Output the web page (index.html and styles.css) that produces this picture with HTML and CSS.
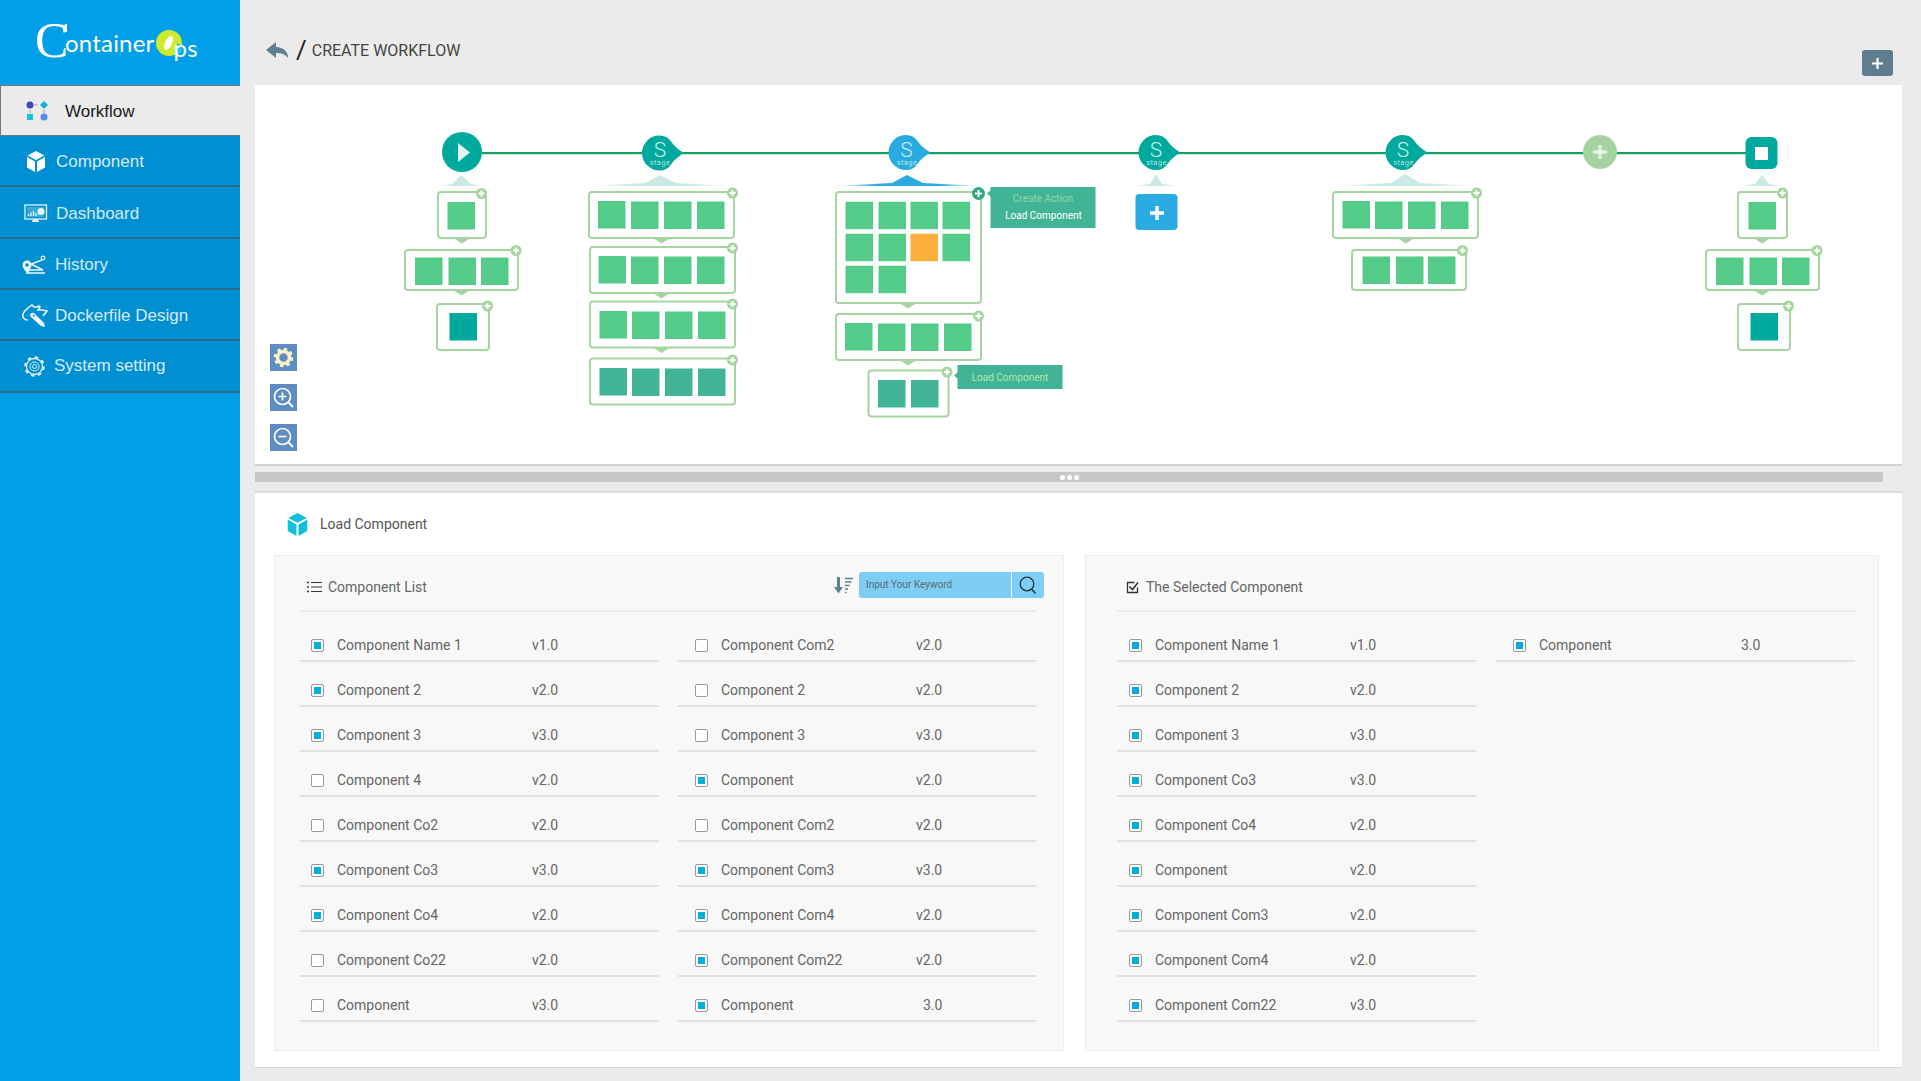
FILE: index.html
```html
<!DOCTYPE html>
<html lang="en">
<head>
<meta charset="utf-8">
<title>Create Workflow</title>
<link rel="stylesheet" href="styles.css">
</head>
<body>
<div class="app">
  <aside class="sidebar">
    <div class="logo">
      <svg width="240" height="85" viewBox="0 0 240 85">
        <text class="logo-c" x="35" y="57">C</text>
        <path d="M66 24v8" stroke="#fff" stroke-width="2"/>
        <text class="logo-t" x="65" y="52">ontainer</text>
        <circle cx="169" cy="43" r="13" fill="#cfea2a"/>
        <ellipse cx="168.500" cy="43" rx="3.500" ry="7.500" transform="rotate(25 168.500 43)" fill="#fff"/>
        <path d="M178 43c3 3 5 6 3 9-1 3-3 3-5 3-1-3-2-8 2-12z" fill="#19c8f0"/>
        <text class="logo-t" x="173.500" y="57">ps</text>
      </svg>
    </div>
    <nav class="nav">
      <a class="nav-item active">
        <svg class="nav-ic wf" width="24" height="22" viewBox="0 0 24 22">
          <circle cx="5" cy="4" r="3.500" fill="#3f48b5"/><path d="M19 0l4 4-4 4-4-4z" fill="#12b5d6"/>
          <rect x="2" y="13" width="6" height="6" fill="#12c0e0"/><circle cx="19" cy="16" r="3.500" fill="#4d8cf5"/>
          <path d="M9 4h4M5 9v3M19 9v3" stroke="#a9a9a9" stroke-width="1.200"/>
        </svg>
        <span>Workflow</span>
      </a>
      <a class="nav-item">
        <svg class="nav-ic cube" width="20" height="23" viewBox="0 0 20 23"><path d="M10 1l8.500 4.500L10 10 1.500 5.500z M1 7l8 4.500V22l-8-4.500z M19 7l-8 4.500V22l8-4.500z" fill="#fff"/></svg>
        <span>Component</span>
      </a>
      <a class="nav-item">
        <svg class="nav-ic dash" width="24" height="20" viewBox="0 0 24 20">
          <rect x="1" y="1" width="21.500" height="14" fill="none" stroke="#e6f2f8" stroke-width="1.300"/>
          <rect x="3" y="3" width="17.500" height="10" fill="#e6f2f8" fill-opacity=".25"/>
          <circle cx="17" cy="7.500" r="3.500" fill="#e6f2f8"/>
          <path d="M4.500 12V10M7 12V8.500M9.500 12V7M12 12V9" stroke="#fff" stroke-width="1.200"/>
          <path d="M8 18h7l-1-3H9z" fill="#e6f2f8"/>
        </svg>
        <span>Dashboard</span>
      </a>
      <a class="nav-item">
        <svg class="nav-ic hist" width="25" height="20" viewBox="0 0 25 20">
          <path d="M6 5.500a4.500 4.500 0 0 1 4.500 4.500c0 3-3 6-4.500 8-1.500-2-4.500-5-4.500-8A4.500 4.500 0 0 1 6 5.500z" fill="#eef6fa"/>
          <circle cx="6" cy="10" r="1.800" fill="#0090d1"/>
          <path d="M21 5L10 9l12 6H8l-2 3h18" fill="none" stroke="#eef6fa" stroke-width="1.500"/>
          <circle cx="22" cy="3" r="1.800" fill="none" stroke="#eef6fa" stroke-width="1.200"/>
        </svg>
        <span>History</span>
      </a>
      <a class="nav-item">
        <svg class="nav-ic dock" width="27" height="23" viewBox="0 0 27 23">
          <path d="M6 16C2 16 0 13 1 10c1-3 3-4 4-5l2-2 3-2 2 2 3 0 2-1 1 1-2 3 4 0 5 1-4 5" fill="none" stroke="#eef6fa" stroke-width="1.500"/>
          <path d="M8 10c2-1.500 3.500-1.500 4.500-.5l9.500 9.500 1 4-4-1-9.500-8.500C8.500 12.500 8 11.500 8 10z" fill="#eef6fa"/>
          <path d="M11 11l1.500 1.500" stroke="#0090d1" stroke-width="1.400"/>
        </svg>
        <span>Dockerfile Design</span>
      </a>
      <a class="nav-item">
        <svg class="nav-ic gear" width="21" height="21" viewBox="0 0 21 21">
          <circle cx="10.500" cy="10.500" r="8" fill="none" stroke="#e6f2f8" stroke-width="1.300"/>
          <circle cx="10.500" cy="10.500" r="9.300" fill="none" stroke="#e6f2f8" stroke-width="2" stroke-dasharray="3.500 3.800"/>
          <circle cx="10.500" cy="10.500" r="4.500" fill="none" stroke="#e6f2f8"/>
          <circle cx="10.500" cy="10.500" r="2" fill="none" stroke="#e6f2f8"/>
        </svg>
        <span>System setting</span>
      </a>
    </nav>
  </aside>

  <main class="main">
    <header class="topbar">
      <svg class="back" width="22" height="16" viewBox="0 0 22 16"><path d="M0 8l10-8v5c8 0 12 5 12 11-3-4-7-5-12-5v5z" fill="#5f7f90"/></svg>
      <span class="slash">/</span>
      <h1 class="title">CREATE WORKFLOW</h1>
      <button class="add-top" type="button"><svg width="13" height="13" viewBox="0 0 13 13"><path d="M6.500 1v11M1 6.500h11" stroke="#fff" stroke-width="2.200"/></svg></button>
    </header>

    <section class="canvas">
      <svg class="diagram" width="1647" height="378" viewBox="255 85 1647 378">
        <defs>
          <linearGradient id="fadeTeal"><stop offset="0" stop-color="#cbeae6" stop-opacity="0"/><stop offset=".3" stop-color="#cbeae6"/><stop offset=".7" stop-color="#cbeae6"/><stop offset="1" stop-color="#cbeae6" stop-opacity="0"/></linearGradient>
          <linearGradient id="fadeBlue"><stop offset="0" stop-color="#29abe2" stop-opacity="0"/><stop offset=".3" stop-color="#29abe2"/><stop offset=".7" stop-color="#29abe2"/><stop offset="1" stop-color="#29abe2" stop-opacity="0"/></linearGradient>
          <g id="pb"><circle r="5.500" fill="#a5d6a0"/><path d="M-3 0h6M0-3v6" stroke="#fff" stroke-width="1.800"/></g>
          <path id="tri" d="M-8 0h16l-8 5z" fill="#a5d6a0"/>
          <path id="stage" d="M0-17.500c5 0 9 2 11.500 6C14.500-7 19-3 24.500 0 19 3 14.500 7 11.500 11.500c-2.500 4-6.500 6-11.500 6a17.500 17.500 0 0 1 0-35z"/>
        </defs>

        <rect class="flow" x="480" y="152" width="1270" height="2.200"/>

        <circle class="teal" cx="462" cy="152" r="20"/>
        <path d="M458 143v19l12-9.500z" fill="#e3f6f3"/>

        <use class="teal" href="#stage" x="659.500" y="153"/>
        <text class="s" x="660" y="157">S</text><text class="st" x="660" y="164.500">stage</text>
        <use class="blue" href="#stage" x="906" y="152.500"/>
        <text class="s" x="906.500" y="157">S</text><text class="st" x="907" y="164.500">stage</text>
        <use class="teal" href="#stage" x="1156" y="152.500"/>
        <text class="s" x="1156" y="157">S</text><text class="st" x="1156.500" y="164.500">stage</text>
        <use class="teal" href="#stage" x="1403" y="152.500"/>
        <text class="s" x="1403" y="157">S</text><text class="st" x="1403.500" y="164.500">stage</text>

        <circle cx="1600" cy="152" r="17" fill="#a5d4a0"/>
        <path d="M1600 145v14M1593 152h14" stroke="#e9f5e8" stroke-width="3"/>

        <rect class="teal" x="1745.500" y="137" width="32" height="32" rx="6"/>
        <rect x="1755" y="147" width="13" height="13" fill="#fff"/>

        <polygon class="f-teal" points="438,186 452,184 461,175 471,184 485,186"/>
        <polygon class="f-teal" points="588,186 645,183 660,175 676,183 735,186"/>
        <polygon class="f-blue" points="834,186 892,183 907,175 923,183 982,186"/>
        <polygon class="f-teal" points="1134,186 1150,184 1156,174 1162,184 1179,186"/>
        <polygon class="f-teal" points="1332,186 1391,183 1405,174 1420,183 1478,186"/>
        <polygon class="f-teal" points="1740,186 1755,184 1762,175 1769,184 1785,186"/>

        <!-- play column -->
        <rect class="box" x="438" y="192" width="48" height="46"/>
        <rect class="sq" x="447.500" y="202"/>
        <use href="#pb" x="481.500" y="193.500"/><use href="#tri" x="462" y="238.500"/>
        <rect class="box" x="405" y="250" width="113" height="40"/>
        <rect class="sq" x="415" y="257.500"/><rect class="sq" x="448.500" y="257.500"/><rect class="sq" x="481" y="257.500"/>
        <use href="#pb" x="516" y="250.500"/><use href="#tri" x="461.500" y="290.500"/>
        <rect class="box" x="437" y="304" width="52" height="46"/>
        <rect class="sq sq-teal" x="449.500" y="313"/>
        <use href="#pb" x="487.500" y="306"/>

        <!-- stage 1 -->
        <rect class="box" x="589" y="192" width="145" height="46"/>
        <rect class="sq" x="598" y="201"/><rect class="sq" x="631" y="201.500"/><rect class="sq" x="664" y="201.500"/><rect class="sq" x="697" y="201.500"/>
        <use href="#pb" x="732.500" y="193"/><use href="#tri" x="661.500" y="238.500"/>
        <rect class="box" x="590" y="247" width="145" height="46"/>
        <rect class="sq" x="598.500" y="256"/><rect class="sq" x="631" y="256.500"/><rect class="sq" x="664" y="256.500"/><rect class="sq" x="697" y="256.500"/>
        <use href="#pb" x="732.500" y="248"/><use href="#tri" x="661.500" y="293.500"/>
        <rect class="box" x="590" y="301.500" width="145" height="46"/>
        <rect class="sq" x="599.500" y="311"/><rect class="sq" x="632" y="311.500"/><rect class="sq" x="665" y="311.500"/><rect class="sq" x="698" y="311.500"/>
        <use href="#pb" x="732.500" y="304"/><use href="#tri" x="661.500" y="348"/>
        <rect class="box" x="590" y="358.500" width="145" height="46"/>
        <rect class="sq sq-dim" x="599.500" y="368"/><rect class="sq sq-dim" x="632" y="368.500"/><rect class="sq sq-dim" x="665" y="368.500"/><rect class="sq sq-dim" x="698" y="368.500"/>
        <use href="#pb" x="732.500" y="360"/>

        <!-- stage 2 -->
        <rect class="box" x="836" y="192" width="145" height="111"/>
        <rect class="sq" x="845.500" y="201.700"/><rect class="sq" x="878.500" y="201.700"/><rect class="sq" x="910.500" y="201.700"/><rect class="sq" x="942.500" y="201.700"/>
        <rect class="sq" x="845.500" y="233.700"/><rect class="sq" x="878.500" y="233.700"/><rect class="sq sq-or" x="910.500" y="233.700"/><rect class="sq" x="942.500" y="233.700"/>
        <rect class="sq" x="845.500" y="265.700"/><rect class="sq" x="878.500" y="265.700"/>
        <use href="#tri" x="908" y="303.500"/>
        <circle cx="978.500" cy="193.500" r="6.500" fill="#2fa884"/><path d="M975 193.500h7M978.500 190v7" stroke="#fff" stroke-width="2"/>
        <path d="M991 190l-4 3.500 4 3.500z" fill="#42b496"/>
        <rect class="tip" x="990.500" y="187" width="105" height="41"/>
        <text class="tip-t tip-dim" x="1043" y="202">Create Action</text>
        <text class="tip-t tip-on" x="1043.500" y="219">Load Component</text>
        <rect class="box" x="836" y="314" width="145" height="46"/>
        <rect class="sq" x="845" y="323"/><rect class="sq" x="878" y="323.500"/><rect class="sq" x="911" y="323.500"/><rect class="sq" x="944" y="323.500"/>
        <use href="#pb" x="978.500" y="316"/><use href="#tri" x="908" y="360.500"/>
        <rect class="box" x="868.500" y="370.500" width="80" height="46"/>
        <rect class="sq sq-dim" x="878" y="380"/><rect class="sq sq-dim" x="911" y="380"/>
        <use href="#pb" x="947" y="372"/>
        <path d="M958 372l-4 3.500 4 3.500z" fill="#42b496"/>
        <rect class="tip" x="957.500" y="365" width="105" height="24"/>
        <text class="tip-t tip-soft" x="1010" y="381">Load Component</text>

        <!-- stage 3 add -->
        <rect x="1135.500" y="194" width="42" height="36" rx="4" fill="#29abe2"/>
        <path d="M1157 206v14M1150 213h14" stroke="#fff" stroke-width="3.500"/>

        <!-- stage 4 -->
        <rect class="box" x="1333" y="192" width="145" height="46"/>
        <rect class="sq" x="1342.500" y="201"/><rect class="sq" x="1375" y="201.500"/><rect class="sq" x="1408" y="201.500"/><rect class="sq" x="1441" y="201.500"/>
        <use href="#pb" x="1476.500" y="193"/><use href="#tri" x="1406" y="238.500"/>
        <rect class="box" x="1352" y="250" width="114" height="40"/>
        <rect class="sq" x="1362.500" y="256.500"/><rect class="sq" x="1396" y="256.500"/><rect class="sq" x="1428" y="256.500"/>
        <use href="#pb" x="1462.500" y="250.500"/>

        <!-- stop column -->
        <rect class="box" x="1738" y="192" width="49" height="46"/>
        <rect class="sq" x="1748.500" y="202"/>
        <use href="#pb" x="1782.500" y="193"/><use href="#tri" x="1762" y="238.500"/>
        <rect class="box" x="1706" y="250" width="113" height="40"/>
        <rect class="sq" x="1716" y="257.500"/><rect class="sq" x="1749.500" y="257.500"/><rect class="sq" x="1782" y="257.500"/>
        <use href="#pb" x="1817" y="250.500"/><use href="#tri" x="1762" y="290.500"/>
        <rect class="box" x="1738" y="304" width="52" height="46"/>
        <rect class="sq sq-teal" x="1750.500" y="313"/>
        <use href="#pb" x="1788.500" y="306"/>
      </svg>
      <div class="tools">
        <button class="tool" type="button">
          <svg width="21" height="21" viewBox="0 0 21 21"><circle cx="10.500" cy="10.500" r="6" fill="none" stroke="#fdf2c4" stroke-width="3.500"/><circle cx="10.500" cy="10.500" r="8.300" fill="none" stroke="#fdf2c4" stroke-width="3" stroke-dasharray="3.300 3.220"/></svg>
        </button>
        <button class="tool" type="button">
          <svg width="21" height="21" viewBox="0 0 21 21"><circle cx="9.500" cy="9.500" r="8" fill="none" stroke="#fff" stroke-width="1.700"/><path d="M15 15l5 5" stroke="#fff" stroke-width="2"/><path d="M9.500 5.500v8M5.500 9.500h8" stroke="#fff" stroke-width="1.700"/></svg>
        </button>
        <button class="tool" type="button">
          <svg width="21" height="21" viewBox="0 0 21 21"><circle cx="9.500" cy="9.500" r="8" fill="none" stroke="#fff" stroke-width="1.700"/><path d="M15 15l5 5" stroke="#fff" stroke-width="2"/><path d="M5.500 9.500h8" stroke="#fff" stroke-width="1.700"/></svg>
        </button>
      </div>
    </section>

    <div class="splitter"><span class="dots"><i></i><i></i><i></i></span></div>

    <section class="lower">
      <div class="lower-head">
        <svg width="23" height="25" viewBox="0 0 20 23"><path d="M10 1l8.500 4.500L10 10 1.500 5.500z M1 7l8 4.500V22l-8-4.500z M19 7l-8 4.500V22l8-4.500z" fill="#10c0dc"/></svg>
        <span>Load Component</span>
      </div>
      <div class="panels">
        <div class="panel panel-left">
          <div class="panel-head">
            <svg class="list-ic" width="15" height="12" viewBox="0 0 15 12"><path d="M4 1.500h11M4 6h11M4 10.500h11" stroke="#333" stroke-width="1.200"/><path d="M0 1.500h2M0 6h2M0 10.500h2" stroke="#333" stroke-width="1.600"/></svg>
            <span>Component List</span>
            <svg class="sort-ic" width="20" height="17" viewBox="0 0 20 17"><path d="M3 0h3v10h3l-4.500 6.500L0 10h3z" fill="#5f7f90"/><path d="M11 1.500h8M11 5h6.500M11 8.500h4.500M11 12h3M11 15.500h1.500" stroke="#5f7f90" stroke-width="1.500"/></svg>
            <div class="search">
              <span class="search-input">Input Your Keyword</span>
              <span class="search-btn"><svg width="18" height="18" viewBox="0 0 18 18"><circle cx="8" cy="8" r="6.800" fill="none" stroke="#24363d" stroke-width="1.300"/><path d="M12.500 13l4 4.500" stroke="#24363d" stroke-width="1.500"/></svg></span>
            </div>
          </div>
          <div class="rows">
            <div class="row"><i class="cb on"></i><span class="name">Component Name 1</span><span>v1.0</span></div>
            <div class="row"><i class="cb"></i><span class="name">Component Com2</span><span>v2.0</span></div>
            <div class="row"><i class="cb on"></i><span class="name">Component 2</span><span>v2.0</span></div>
            <div class="row"><i class="cb"></i><span class="name">Component 2</span><span>v2.0</span></div>
            <div class="row"><i class="cb on"></i><span class="name">Component 3</span><span>v3.0</span></div>
            <div class="row"><i class="cb"></i><span class="name">Component 3</span><span>v3.0</span></div>
            <div class="row"><i class="cb"></i><span class="name">Component 4</span><span>v2.0</span></div>
            <div class="row"><i class="cb on"></i><span class="name">Component</span><span>v2.0</span></div>
            <div class="row"><i class="cb"></i><span class="name">Component Co2</span><span>v2.0</span></div>
            <div class="row"><i class="cb"></i><span class="name">Component Com2</span><span>v2.0</span></div>
            <div class="row"><i class="cb on"></i><span class="name">Component Co3</span><span>v3.0</span></div>
            <div class="row"><i class="cb on"></i><span class="name">Component Com3</span><span>v3.0</span></div>
            <div class="row"><i class="cb on"></i><span class="name">Component Co4</span><span>v2.0</span></div>
            <div class="row"><i class="cb on"></i><span class="name">Component Com4</span><span>v2.0</span></div>
            <div class="row"><i class="cb"></i><span class="name">Component Co22</span><span>v2.0</span></div>
            <div class="row"><i class="cb on"></i><span class="name">Component Com22</span><span>v2.0</span></div>
            <div class="row"><i class="cb"></i><span class="name">Component</span><span>v3.0</span></div>
            <div class="row"><i class="cb on"></i><span class="name">Component</span><span class="bare">3.0</span></div>
          </div>
        </div>
        <div class="panel panel-right">
          <div class="panel-head">
            <svg class="list-ic" width="13" height="13" viewBox="0 0 13 13"><path d="M11.500 6.500v5h-10v-10h7" fill="none" stroke="#333" stroke-width="1.300"/><path d="M3.500 5.500l3 3 5.500-7" fill="none" stroke="#333" stroke-width="1.500"/></svg>
            <span>The Selected Component</span>
          </div>
          <div class="rows rows-sel">
            <div class="column">
              <div class="row"><i class="cb on"></i><span class="name">Component Name 1</span><span>v1.0</span></div>
              <div class="row"><i class="cb on"></i><span class="name">Component 2</span><span>v2.0</span></div>
              <div class="row"><i class="cb on"></i><span class="name">Component 3</span><span>v3.0</span></div>
              <div class="row"><i class="cb on"></i><span class="name">Component Co3</span><span>v3.0</span></div>
              <div class="row"><i class="cb on"></i><span class="name">Component Co4</span><span>v2.0</span></div>
              <div class="row"><i class="cb on"></i><span class="name">Component</span><span>v2.0</span></div>
              <div class="row"><i class="cb on"></i><span class="name">Component Com3</span><span>v2.0</span></div>
              <div class="row"><i class="cb on"></i><span class="name">Component Com4</span><span>v2.0</span></div>
              <div class="row"><i class="cb on"></i><span class="name">Component Com22</span><span>v3.0</span></div>
            </div>
            <div class="column">
              <div class="row"><i class="cb on"></i><span class="name">Component</span><span class="bare">3.0</span></div>
            </div>
          </div>
        </div>
      </div>
    </section>
  </main>
</div>
</body>
</html>
```
FILE: styles.css
```css
* { box-sizing: border-box; }
html, body { margin: 0; height: 100%; overflow: hidden; }
body { font-family: Roboto, "Liberation Sans", sans-serif; background: #ebebeb; color: #666; }

.app { display: flex; height: 1081px; }

/* sidebar */
.sidebar { width: 240px; flex: none; background: #009fe8; }
.logo { height: 85px; }
.logo svg { display: block; }
.logo-c { font-family: "Liberation Serif", serif; font-size: 50px; fill: #fff; }
.logo-t { font-family: Lato, sans-serif; font-size: 24px; fill: #fff; letter-spacing: .2px; }
.nav { display: flex; flex-direction: column; }
.nav-item {
  position: relative; display: flex; align-items: center; height: 51px; padding-top: 2px;
  background: #0090d1; border-bottom: 2px solid #2c6a8c;
  font-family: "Liberation Sans", sans-serif; font-size: 17px; color: #d8e8f2;
}
.nav-item:nth-child(3), .nav-item:nth-child(6) { height: 52px; }
.nav-item:nth-child(3) { padding-top: 4px; }
.nav-item:nth-child(6) { padding-top: 0; }
.nav-item.active {
  height: 51px; padding-top: 3px; background: #ebebeb; color: #1a1a1a;
  border-top: 1px solid #777; border-left: 1px solid #777; border-bottom: 1px solid #777;
}
.nav-ic { flex: none; }
.wf { margin: 0 16px 0 24px; }
.cube { margin: 0 10px 0 26px; }
.dash { margin: 0 8px 0 24px; }
.hist { margin: 0 9px 0 21px; }
.dock { margin: 0 6px 0 22px; }
.gear { margin: 0 9px 0 24px; }

/* main */
.main { flex: 1; min-width: 0; padding: 0 19px 0 15px; display: flex; flex-direction: column; }
.topbar { position: relative; height: 85px; flex: none; display: flex; align-items: center; padding: 15px 0 0 11px; }
.back { flex: none; }
.slash { margin-left: 8px; font-size: 26px; color: #222; font-weight: 400; }
.title { margin: 0 0 0 5px; font-size: 16px; font-weight: 400; color: #444; }
.add-top {
  position: absolute; right: 9px; top: 50px; width: 31px; height: 26px; padding: 0; border: 0;
  border-radius: 3px; background: #607d8f; display: flex; align-items: center; justify-content: center;
}

.canvas { position: relative; height: 381px; flex: none; background: #fff; border-bottom: 2px solid #d2d2d2; }
.diagram { display: block; }
.flow { fill: #159e5f; }
.teal { fill: #00a99d; }
.blue { fill: #29abe2; }
.s { font-size: 21px; font-weight: 300; fill: #c9f0ea; text-anchor: middle; }
.st { font-size: 7.5px; fill: #b5e4de; text-anchor: middle; letter-spacing: .4px; }
.f-teal { fill: url(#fadeTeal); }
.f-blue { fill: url(#fadeBlue); }
.box { fill: #fff; stroke: #a5d6a0; stroke-width: 2; rx: 3px; }
.sq { width: 27.5px; height: 27.5px; fill: #55cb8a; }
.sq-teal { fill: #00a99d; }
.sq-dim { fill: #42b496; }
.sq-or { fill: #fbb03b; }
.tip { fill: #42b496; }
.tip-t { font-size: 10px; text-anchor: middle; }
.tip-dim { fill: #8ed8a0; }
.tip-on { fill: #fff; }
.tip-soft { fill: #b0e6ac; }

.tools { position: absolute; left: 15px; top: 259px; display: flex; flex-direction: column; gap: 13px; }
.tool { width: 27px; height: 27px; padding: 0; border: 0; background: #5d8dc3; display: flex; align-items: center; justify-content: center; }

.splitter { height: 10px; margin: 6px 19px 0 0; flex: none; background: #c8c8c8; display: flex; align-items: center; justify-content: center; }
.dots { display: flex; gap: 2px; }
.dots i { width: 5px; height: 5px; border-radius: 50%; background: #fff; }

.lower { margin-top: 9px; height: 577px; flex: none; background: #fff; border-top: 2px solid #dcdcdc; border-bottom: 1px solid #d4d4d4; padding: 0 23px 0 19px; }
.lower-head { height: 62px; display: flex; align-items: center; padding: 0 0 0 12px; gap: 11px; font-size: 14px; color: #555; }
.panels { display: grid; grid-template-columns: 790px 794px; gap: 21px; }
.panel { height: 496px; background: #f8f8f8; border: 1px solid #ececec; }
.panel-left { padding: 0 26px 0 25px; }
.panel-right { padding: 0 22px 0 31px; }
.panel-head { position: relative; height: 56px; display: flex; align-items: center; padding: 8px 0 0 7px; border-bottom: 2px solid #ededed; font-size: 14px; color: #666; }
.list-ic { margin-right: 6px; flex: none; }
.panel-right .panel-head { padding-left: 9px; }
.panel-right .list-ic { margin-right: 7px; }
.sort-ic { margin-left: auto; margin-top: -4px; }
.panel-left .sort-ic { margin-right: 183px; }
.search { position: absolute; right: -7px; top: 16px; display: flex; height: 26px; }
.search-input { width: 152px; background: #7dcdf4; border-radius: 3px 0 0 3px; font-size: 10px; line-height: 26px; padding-left: 7px; color: #5a6b75; }
.search-btn { width: 32px; margin-left: 1px; background: #7dcdf4; border-radius: 0 3px 3px 0; display: flex; align-items: center; justify-content: center; }

.rows { display: grid; grid-template-columns: 359px 358px; column-gap: 19px; padding-top: 5px; }
.rows-sel { column-gap: 20px; grid-template-columns: 359px 359px; }
.row { height: 45px; display: flex; align-items: center; padding: 13px 0 0 11px; border-bottom: 2px solid #e2e2e2; font-size: 14px; color: #666; }
.rows > .row:nth-child(even), .rows-sel > .column:nth-child(even) .row { padding-left: 17px; }
.rows-sel > .column:nth-child(odd) .row { padding-left: 12px; }
.name { width: 195px; flex: none; }
.cb { position: relative; flex: none; width: 13px; height: 13px; margin-right: 13px; border: 1px solid #999; border-radius: 2px; background: #fff; }
.cb.on::after { content: ""; position: absolute; left: 2px; top: 2px; width: 7px; height: 7px; background: #00b0d8; }
.bare { margin-left: 7px; }
```
